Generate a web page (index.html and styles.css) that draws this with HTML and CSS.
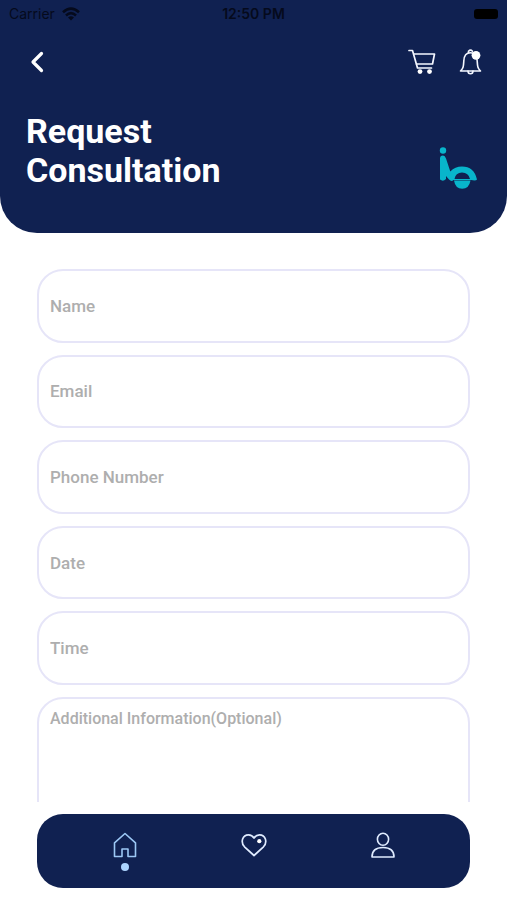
FILE: index.html
```html
<!DOCTYPE html>
<html lang="en">
<head>
<meta charset="utf-8">
<meta name="viewport" content="width=device-width, initial-scale=1">
<title>Request Consultation</title>
<link rel="stylesheet" href="styles.css">
</head>
<body>
<header class="header">
  <div class="status">
    <span class="carrier">Carrier
      <svg width="18" height="14" viewBox="0 0 18 14" aria-hidden="true"><g fill="none" stroke="currentColor" stroke-width="2.6"><path d="M1 5.2Q9-2 17 5.2"/><path d="M4 8.4Q9 4 14 8.4"/></g><path fill="currentColor" d="M6 10.4Q9 8 12 10.4L9 13.5Z"/></svg>
    </span>
    <span class="clock">12:50 PM</span>
    <span class="power"><span class="battery"></span></span>
  </div>
  <div class="toolbar">
    <button class="icon-button" type="button" aria-label="Back">
      <svg width="14" height="22" viewBox="0 0 14 22"><path d="M11.500 2.500 3 11l8.500 8.500" fill="none" stroke="#fff" stroke-width="3.200" stroke-linecap="round" stroke-linejoin="round"/></svg>
    </button>
    <div class="actions">
      <button class="icon-button" type="button" aria-label="Cart">
        <svg width="28" height="26" viewBox="0 0 28 26"><g fill="none" stroke="#f4f7ff" stroke-width="1.700" stroke-linecap="round" stroke-linejoin="round"><path d="M1 1.500H4.500L9.500 19H23.500"/><path d="M5.800 5H26.500L24.500 15H8.600"/></g><circle cx="12" cy="22.600" r="2.400" fill="#fff"/><circle cx="21.500" cy="22.600" r="2.400" fill="#fff"/></svg>
      </button>
      <button class="icon-button" type="button" aria-label="Notifications">
        <svg width="24" height="26" viewBox="0 0 24 26"><g fill="none" stroke="#f4f7ff" stroke-width="1.600" stroke-linejoin="round" stroke-linecap="round"><path d="M1.500 22C4.500 19 4.500 17 4.800 12C5 7 7.500 3.800 11.500 3.800S18 7 18.200 12C18.500 17 18.500 19 21.500 22Z"/><path d="M9.500 3.500V2.200Q11.500 0 13.500 2.200"/><path d="M9 22Q9 24.800 11.500 24.800T14 22"/></g><circle cx="17" cy="6.300" r="4.400" fill="#fff"/></svg>
      </button>
    </div>
  </div>
  <div class="heading">
    <h1>Request<br>Consultation</h1>
    <svg class="logo" width="40" height="44" viewBox="0 0 40 44" role="img" aria-label="Company logo"><g fill="#08b5cb"><circle cx="6" cy="4.500" r="3.200"/><path d="M3 12.500Q3 9.500 6 9.500Q8 9.500 9 12.500L13.300 25.500Q18 20.500 25 20.500Q37 20.500 40 33.500Q39 35 34 34H16.500Q14.500 36 12 33.500L9 30V33Q6 36 3 33.500Z"/><path d="M17 34.500H33.500Q32 42.800 25.200 42.800T17 34.500Z"/></g><path d="M17.500 33Q18.500 26.500 25 26.500T33 33Z" fill="#102151"/></svg>
  </div>
</header>
<main class="content">
  <form class="form">
    <div class="fields">
      <input class="field" type="text" placeholder="Name" aria-label="Name">
      <input class="field" type="email" placeholder="Email" aria-label="Email">
      <input class="field" type="tel" placeholder="Phone Number" aria-label="Phone Number">
      <input class="field" type="text" placeholder="Date" aria-label="Date">
      <input class="field" type="text" placeholder="Time" aria-label="Time">
    </div>
    <textarea class="field notes" placeholder="Additional Information(Optional)" aria-label="Additional Information(Optional)"></textarea>
  </form>
</main>
<nav class="tabs" aria-label="Main">
  <a class="tab active" href="#home" aria-label="Home">
    <svg width="26" height="26" viewBox="0 0 26 26"><path d="M2.500 10.800 13 1.500 23.500 10.800V24.500H16V17H10V24.500H2.500Z" fill="none" stroke="currentColor" stroke-width="1.600" stroke-linejoin="round"/></svg>
    <span class="dot"></span>
  </a>
  <a class="tab" href="#favorites" aria-label="Favorites">
    <svg width="26" height="26" viewBox="0 0 26 26"><path d="M13 23.500 3.500 14.800C-.8 10 1.500 2.800 7.500 2.800Q11 2.800 13 6Q15 2.800 18.500 2.800C24.500 2.800 26.800 10 22.500 14.800Z" fill="none" stroke="currentColor" stroke-width="1.700" stroke-linejoin="round"/><circle cx="18.300" cy="9.200" r="2.100" fill="#fff"/></svg>
  </a>
  <a class="tab" href="#profile" aria-label="Profile">
    <svg width="26" height="26" viewBox="0 0 26 26"><g fill="none" stroke="currentColor" stroke-width="1.600" stroke-linejoin="round"><ellipse cx="13" cy="7.200" rx="5.600" ry="6"/><path d="M2 25C2 18.500 6 15.500 13 15.500S24 18.500 24 25Z"/></g></svg>
  </a>
</nav>
</body>
</html>
```
FILE: styles.css
```css
* {
  box-sizing: border-box;
}

body {
  margin: 0;
  height: 100vh;
  display: flex;
  flex-direction: column;
  background: #fff;
  font-family: Roboto, "Liberation Sans", sans-serif;
}

svg {
  display: block;
}

.header {
  flex: none;
  padding-bottom: 43px;
  background: #102151;
  border-radius: 0 0 37px 37px;
  color: #fff;
}

.status {
  display: grid;
  grid-template-columns: 1fr auto 1fr;
  align-items: center;
  height: 28px;
  padding: 0 9px;
  color: #050a1c;
  font: 14px/20px Inter, sans-serif;
}

.carrier {
  display: flex;
  align-items: center;
  gap: 7px;
}

.clock {
  font-weight: 600;
}

.power {
  display: flex;
  justify-content: flex-end;
}

.battery {
  width: 24px;
  height: 10px;
  border-radius: 3px;
  background: #000;
}

.toolbar {
  display: flex;
  align-items: center;
  justify-content: space-between;
  height: 68px;
  padding: 0 24px 0 30px;
}

.actions {
  display: flex;
  gap: 23px;
}

.icon-button {
  padding: 0;
  border: 0;
  background: none;
}

.heading {
  display: flex;
  align-items: center;
  justify-content: space-between;
  padding: 16px 30px 0 26px;
}

.heading h1 {
  margin: 0;
  font-size: 34px;
  line-height: 39px;
  font-weight: 700;
}

.logo {
  align-self: flex-end;
}

.content {
  flex: 1;
  min-height: 0;
  margin: 36px 37px 12px;
  overflow: hidden;
}

.form {
  display: grid;
  gap: 12px;
}

.fields {
  display: grid;
  grid-auto-rows: 1fr;
  gap: 12px;
  min-height: 416px;
}

.field {
  width: 100%;
  padding: 0 11px;
  border: 2px solid #e6e5f8;
  border-radius: 26px;
  background: #fff;
  color: #333;
  font-family: inherit;
  font-size: 17px;
  font-weight: 500;
  outline: 0;
}

.field::placeholder {
  color: #aeaeae;
  opacity: 1;
}

.notes {
  display: block;
  height: 160px;
  padding-top: 10px;
  font-size: 16px;
  line-height: 20px;
  resize: none;
}

.tabs {
  flex: none;
  display: grid;
  grid-template-columns: repeat(3, 1fr);
  height: 74px;
  margin: 0 37px 12px;
  padding: 18px 23px 0;
  background: #102151;
  border-radius: 26px;
}

.tab {
  display: flex;
  flex-direction: column;
  align-items: center;
  gap: 5px;
  color: #e0ecff;
}

.active {
  color: #9cc8f5;
}

.dot {
  width: 8px;
  height: 8px;
  border-radius: 50%;
  background: #add5ff;
}
```
